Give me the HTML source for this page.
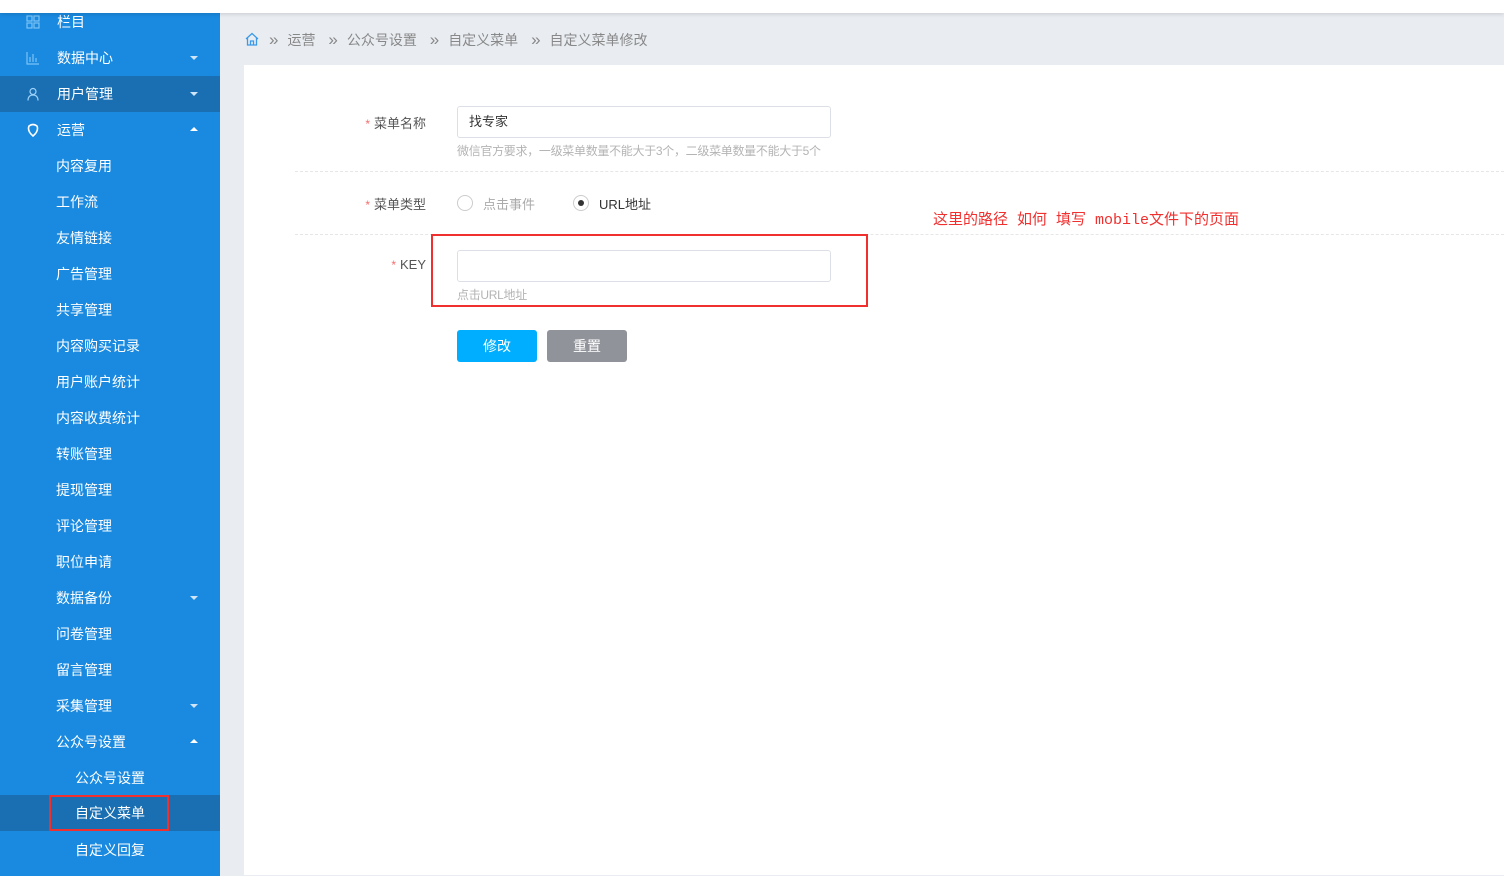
<!DOCTYPE html><html><head><meta charset="utf-8"><style>
*{margin:0;padding:0;box-sizing:border-box}
body{width:1504px;height:875px;overflow:hidden;background:#e9edf2;font-family:"Liberation Sans","Noto Sans CJK SC",sans-serif;position:relative}
.top{position:absolute;left:0;top:0;width:1504px;height:13px;background:#fff;box-shadow:0 1px 4px rgba(0,0,0,.15);z-index:3}
.side{position:absolute;left:0;top:1px;width:220px;height:875px;background:#1a8ae0}
.it{position:absolute;left:0;width:220px;height:36px;line-height:36px;color:#fff;font-size:14px}
.it .t{position:absolute}
.act{background:#1a6fb3}
.ar{position:absolute;left:190px;top:16px;width:0;height:0;border-left:4px solid transparent;border-right:4px solid transparent}
.dn{border-top:4px solid #cfe6fa}
.up{border-bottom:4px solid #fff;top:15px}
.ic{position:absolute;left:26px;top:11px;width:14px;height:14px}
.bc{position:absolute;left:245px;top:30px;font-size:14px;color:#888}
.bc span{margin-right:9px}
.bc .c{font-size:17px;line-height:14px}
.panel{position:absolute;left:244px;top:65px;width:1260px;height:810px;background:#fff}
.lbl{position:absolute;font-size:13px;color:#555;text-align:right}
.lbl b{color:#f56c6c;font-weight:normal;font-size:12px;margin-right:4px}
.inp{position:absolute;left:457px;width:374px;height:32px;border:1px solid #dcdfe6;border-radius:3px;font-size:13px;color:#333;padding-left:11px;line-height:30px}
.hint{position:absolute;left:457px;font-size:12px;color:#b4b4b4;letter-spacing:-0.3px}
.dash{position:absolute;left:295px;width:1209px;border-top:1px dashed #e6e6e6}
.rad{position:absolute;width:16px;height:16px;border:1px solid #ccc;border-radius:50%}
.btn{position:absolute;top:330px;width:80px;height:32px;line-height:32px;text-align:center;color:#fff;font-size:14px;border-radius:3px}
</style></head><body>
<div class="top"></div>
<div class="side">
<div class="it" style="top:3px"><svg class="ic" viewBox="0 0 14 14" fill="none" stroke="#7cc4f5" stroke-width="1.2"><rect x="1" y="1" width="5" height="5"/><rect x="8" y="1" width="5" height="5"/><rect x="1" y="8" width="5" height="5"/><rect x="8" y="8" width="5" height="5"/></svg><span class="t" style="left:57px">栏目</span></div>
<div class="it" style="top:39px"><svg class="ic" viewBox="0 0 14 14" fill="none" stroke="#7cc4f5" stroke-width="1.2"><path d="M1 1V13H13M4 11V6M7 11V3M10 11V7"/></svg><span class="t" style="left:57px">数据中心</span><i class="ar dn"></i></div>
<div class="it act" style="top:75px"><svg class="ic" viewBox="0 0 14 14" fill="none" stroke="#9fd3fa" stroke-width="1.2"><circle cx="7" cy="4.5" r="3"/><path d="M2 13.5C2 10 4 8 7 8S12 10 12 13.5"/></svg><span class="t" style="left:57px">用户管理</span><i class="ar dn"></i></div>
<div class="it" style="top:111px"><svg class="ic" viewBox="0 0 14 14" fill="none" stroke="#fff" stroke-width="1.6"><path d="M3 3Q7 0 11 3Q13 8 7 13Q1 8 3 3Z"/></svg><span class="t" style="left:57px">运营</span><i class="ar up"></i></div>
<div class="it" style="top:147px"><span class="t" style="left:56px">内容复用</span></div>
<div class="it" style="top:183px"><span class="t" style="left:56px">工作流</span></div>
<div class="it" style="top:219px"><span class="t" style="left:56px">友情链接</span></div>
<div class="it" style="top:255px"><span class="t" style="left:56px">广告管理</span></div>
<div class="it" style="top:291px"><span class="t" style="left:56px">共享管理</span></div>
<div class="it" style="top:327px"><span class="t" style="left:56px">内容购买记录</span></div>
<div class="it" style="top:363px"><span class="t" style="left:56px">用户账户统计</span></div>
<div class="it" style="top:399px"><span class="t" style="left:56px">内容收费统计</span></div>
<div class="it" style="top:435px"><span class="t" style="left:56px">转账管理</span></div>
<div class="it" style="top:471px"><span class="t" style="left:56px">提现管理</span></div>
<div class="it" style="top:507px"><span class="t" style="left:56px">评论管理</span></div>
<div class="it" style="top:543px"><span class="t" style="left:56px">职位申请</span></div>
<div class="it" style="top:579px"><span class="t" style="left:56px">数据备份</span><i class="ar dn"></i></div>
<div class="it" style="top:615px"><span class="t" style="left:56px">问卷管理</span></div>
<div class="it" style="top:651px"><span class="t" style="left:56px">留言管理</span></div>
<div class="it" style="top:687px"><span class="t" style="left:56px">采集管理</span><i class="ar dn"></i></div>
<div class="it" style="top:723px"><span class="t" style="left:56px">公众号设置</span><i class="ar up"></i></div>
<div class="it" style="top:759px"><span class="t" style="left:75px">公众号设置</span></div>
<div class="it act" style="top:794px"><span class="t" style="left:75px">自定义菜单</span><div style="position:absolute;left:49px;top:0;width:120px;height:36px;border:2px solid #f0302f"></div></div>
<div class="it" style="top:831px"><span class="t" style="left:75px">自定义回复</span></div>
</div>
<div class="bc"><svg width="14" height="14" viewBox="0 0 14 14" fill="none" stroke="#3a9ae8" stroke-width="1.3" style="vertical-align:-1px;margin-right:10px"><path d="M1 7L7 1.5L13 7M2.5 5.8V13H11.5V5.8M5.5 13V9H8.5V13"/></svg><span class="c">»</span><span>运营</span> <span class="c">»</span><span>公众号设置</span> <span class="c">»</span><span>自定义菜单</span> <span class="c">»</span><span>自定义菜单修改</span></div>
<div class="panel"></div>
<div class="lbl" style="left:340px;top:113px;width:86px"><b>*</b>菜单名称</div>
<div class="inp" style="top:106px">找专家</div>
<div class="hint" style="top:142px">微信官方要求，一级菜单数量不能大于3个，二级菜单数量不能大于5个</div>
<div class="dash" style="top:171px"></div>
<div class="lbl" style="left:340px;top:194px;width:86px"><b>*</b>菜单类型</div>
<div class="rad" style="left:457px;top:195px"></div>
<div style="position:absolute;left:483px;top:194px;font-size:13px;color:#aaa">点击事件</div>
<div class="rad" style="left:573px;top:195px"><div style="position:absolute;left:4px;top:4px;width:6px;height:6px;border-radius:50%;background:#333"></div></div>
<div style="position:absolute;left:599px;top:194px;font-size:13px;color:#333">URL地址</div>
<div style="position:absolute;left:933px;top:208px;font-size:15px;color:#f0302f;font-family:'Liberation Mono','Noto Sans CJK SC',monospace">这里的路径 如何 填写 mobile文件下的页面</div>
<div class="dash" style="top:234px"></div>
<div class="lbl" style="left:340px;top:257px;width:86px"><b>*</b>KEY</div>
<div class="inp" style="top:250px"></div>
<div class="hint" style="top:286px">点击URL地址</div>
<div style="position:absolute;left:431px;top:234px;width:437px;height:73px;border:2px solid #f0302f"></div>
<div class="btn" style="left:457px;background:#00aeff">修改</div>
<div class="btn" style="left:547px;background:#909399">重置</div>
</body></html>
